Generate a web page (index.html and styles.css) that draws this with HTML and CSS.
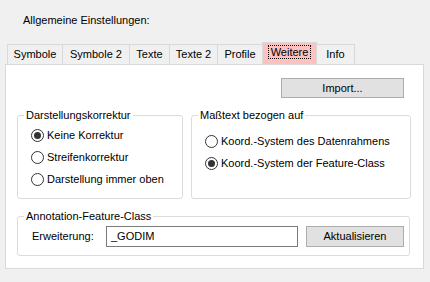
FILE: index.html
```html
<!DOCTYPE html>
<html>
<head>
<meta charset="utf-8">
<link rel="stylesheet" href="styles.css">
</head>
<body>
<div class="title">Allgemeine Einstellungen:</div>
<div class="tabs">
  <div class="tab w-sym">Symbole</div>
  <div class="tab w-sym2">Symbole 2</div>
  <div class="tab w-tex">Texte</div>
  <div class="tab w-tex2">Texte 2</div>
  <div class="tab w-pro">Profile</div>
  <div class="tab tab-active w-wei"><span class="focus">Weitere</span></div>
  <div class="tab tab-last w-info">Info</div>
</div>
<div class="panel">
  <div class="import-row"><div class="btn btn-import">Import...</div></div>
  <div class="groups">
    <fieldset class="group g1">
      <legend>Darstellungskorrektur</legend>
      <div class="radios r1">
        <div class="opt"><span class="radio checked"></span><span>Keine Korrektur</span></div>
        <div class="opt"><span class="radio"></span><span>Streifenkorrektur</span></div>
        <div class="opt"><span class="radio"></span><span>Darstellung immer oben</span></div>
      </div>
    </fieldset>
    <fieldset class="group g2">
      <legend>Maßtext bezogen auf</legend>
      <div class="radios r2">
        <div class="opt"><span class="radio"></span><span>Koord.-System des Datenrahmens</span></div>
        <div class="opt"><span class="radio checked"></span><span>Koord.-System der Feature-Class</span></div>
      </div>
    </fieldset>
  </div>
  <fieldset class="group g3">
    <legend>Annotation-Feature-Class</legend>
    <div class="ext-row">
      <span class="label">Erweiterung:</span>
      <div class="textbox">_GODIM</div>
      <div class="btn btn-akt">Aktualisieren</div>
    </div>
  </fieldset>
</div>
</body>
</html>
```

FILE: styles.css
```css
* { box-sizing: border-box; }
html, body {
  margin: 0;
  padding: 0;
  background: #f0f0f0;
  font-family: "Liberation Sans", Arial, sans-serif;
  font-size: 11px;
  line-height: 13px;
  color: #000;
  width: 430px;
  height: 282px;
  overflow: hidden;
}
.title {
  margin: 14px 0 15px 23px;
  height: 13px;
}
.tabs {
  display: flex;
  align-items: flex-end;
  height: 22px;
  padding-left: 7px;
}
.tab {
  height: 20px;
  border-top: 1px solid #d9d9d9;
  border-left: 1px solid #d9d9d9;
  background: #f0f0f0;
  display: flex;
  justify-content: center;
  padding-top: 3px;
  white-space: nowrap;
}
.tab-last { border-right: 1px solid #d9d9d9; }
.tab-active {
  height: 22px;
  background: #ffc0c0;
  border-right: 1px solid #d9d9d9;
  padding-top: 2px;
}
.tab-active + .tab { border-left: none; }
.focus {
  border: 1px dotted #000;
  height: 14px;
  line-height: 12px;
  padding: 0 2px;
}
.w-sym { width: 55px; }
.w-sym2 { width: 67px; }
.w-tex { width: 40px; }
.w-tex2 { width: 48px; }
.w-pro { width: 45px; }
.w-wei { width: 55px; }
.w-info { width: 38px; }

.panel {
  margin-left: 5px;
  width: 419px;
  height: 205px;
  background: #fff;
  border: 1px solid #d9d9d9;
}
.import-row {
  padding: 13px 0 0 275px;
}
.btn {
  background: #e1e1e1;
  border: 1px solid #adadad;
  display: flex;
  align-items: center;
  justify-content: center;
}
.btn-import {
  width: 123px;
  height: 20px;
}
.groups {
  display: flex;
  gap: 8px;
  margin: 11px 0 0 11px;
}
.group {
  margin: 0;
  padding: 0;
  min-width: 0;
  border: 1px solid #dcdcdc;
  border-radius: 3px;
}
.group legend {
  padding: 0 2px;
  margin-left: 6px;
  line-height: 13px;
}
.g1 { width: 166px; height: 90px; }
.g2 { width: 220px; height: 90px; }
.g3 { width: 393px; height: 46px; margin: 11px 0 0 11px; }

.radios {
  display: flex;
  flex-direction: column;
  padding-left: 13px;
}
.r1 { padding-top: 7px; gap: 9px; }
.r2 { padding-top: 13px; gap: 9px; }
.opt {
  display: flex;
  align-items: center;
  height: 13px;
  gap: 3px;
  white-space: nowrap;
}
.radio {
  width: 13px;
  height: 13px;
  flex: none;
  border-radius: 50%;
  border: 1px solid #333;
  background: #fff;
  display: flex;
  align-items: center;
  justify-content: center;
}
.radio.checked::after {
  content: "";
  width: 7px;
  height: 7px;
  border-radius: 50%;
  background: #333;
}
.ext-row {
  display: flex;
  align-items: center;
  padding: 3px 0 0 14px;
}
.label { width: 74px; }
.textbox {
  width: 192px;
  height: 21px;
  border: 1px solid #7a7a7a;
  background: #fff;
  padding-left: 4px;
  display: flex;
  align-items: center;
}
.btn-akt {
  margin-left: 8px;
  width: 98px;
  height: 21px;
}
```
